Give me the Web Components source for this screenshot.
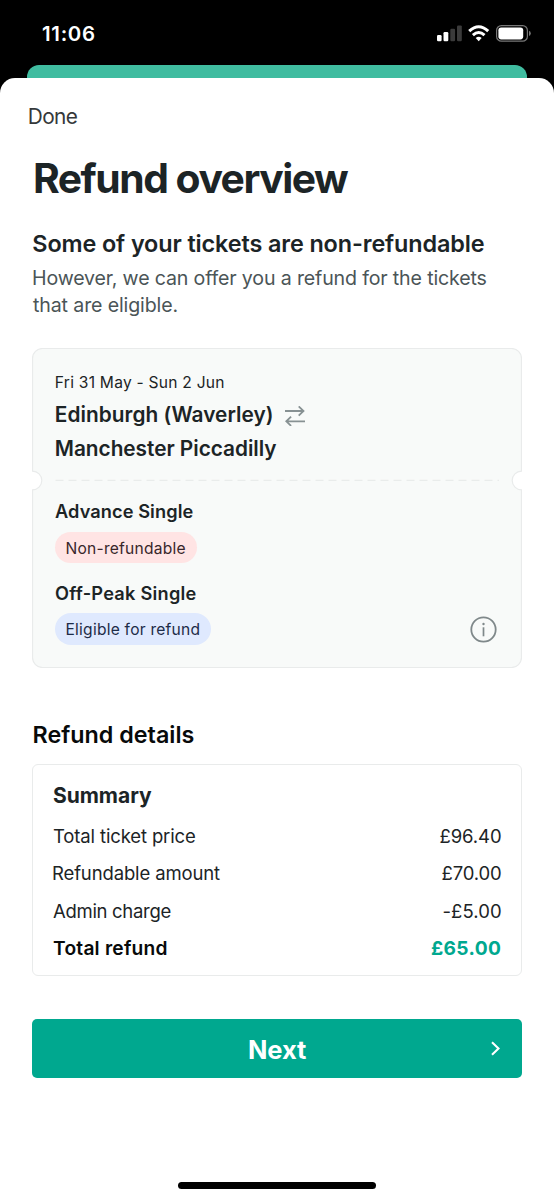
<!DOCTYPE html>
<html lang="en">
<head>
<meta charset="utf-8">
<title>Refund overview</title>
<style>
html,body{margin:0;padding:0;background:#000}
body{width:554px;height:1200px;overflow:hidden;font-family:Inter,"Noto Sans",sans-serif}
</style>
</head>
<body>
<refund-screen></refund-screen>
<script>
const define = (name, html, setup) => {
  const t = document.createElement('template');
  t.innerHTML = html;
  customElements.define(name, class extends HTMLElement {
    constructor() {
      super();
      this.attachShadow({mode: 'open'}).append(t.content.cloneNode(true));
    }
    connectedCallback() { if (setup) setup.call(this, this.shadowRoot); }
  });
};

/* Single line of text; tracking and side margins are set so its ink spans `ink` pixels. */
const ctx = document.createElement('canvas').getContext('2d');
define('ui-text', `<style>:host{display:block;white-space:nowrap;width:max-content;font-kerning:normal}</style><slot></slot>`,
function () {
  const a = n => this.getAttribute(n);
  const size = +a('size'), weight = a('weight') || 400, text = this.textContent;
  ctx.font = `${weight} ${size}px Inter`;
  const m = ctx.measureText(text);
  const ls = (+a('ink') - (m.actualBoundingBoxRight + m.actualBoundingBoxLeft)) / (text.length - 1);
  Object.assign(this.style, {
    fontSize: size + 'px', fontWeight: weight, lineHeight: a('line') + 'px',
    letterSpacing: ls.toFixed(3) + 'px', color: a('color') || '#1c2426',
    marginLeft: m.actualBoundingBoxLeft.toFixed(2) + 'px',
    marginRight: (m.actualBoundingBoxRight - m.width - ls).toFixed(2) + 'px'
  });
});

define('status-bar', `<style>
:host{display:flex;justify-content:space-between;height:65px;box-sizing:border-box;padding:21px 23px 0 42px}
svg{display:block}
</style>
<ui-text size="20.4" weight="600" line="25" ink="53" color="#fff">11:06</ui-text>
<svg width="96" height="24" viewBox="435 21 96 24">
<g fill="#fff"><rect x="437" y="35" width="4.6" height="6.2" rx="1.2"/><rect x="443.5" y="32" width="4.8" height="9.2" rx="1.2"/></g>
<g fill="#3b3b3b"><rect x="450.3" y="28.8" width="4.8" height="12.4" rx="1.2"/><rect x="457" y="25.4" width="4.8" height="15.8" rx="1.2"/></g>
<g fill="none" stroke="#fff" stroke-width="3"><path d="M469.2 31.2Q478.7 22.3 488.2 31.2"/><path d="M472.9 35.1Q478.7 29.8 484.5 35.1"/></g>
<path d="M475.7 38.1Q478.7 35.4 481.7 38.1L478.7 41.3Z" fill="#fff"/>
<rect x="496.6" y="25.6" width="30.8" height="15.6" rx="4.8" fill="none" stroke="#777" stroke-width="1.2"/>
<rect x="498.4" y="27.4" width="24.8" height="12" rx="2.8" fill="#fff"/>
<path d="M529 30.7Q530.8 31.5 530.8 33.4T529 36.1Z" fill="#777"/>
</svg>`);

define('back-sheet', `<style>:host{display:block;height:27px;margin:0 27px -14px;background:#40bca0;border-radius:12px 12px 0 0}</style>`);

define('modal-sheet', `<style>
:host{display:block;position:relative;height:1122px;box-sizing:border-box;padding:27px 32px 0;background:#fff;border-radius:15px 15px 0 0}
</style><slot></slot>`);

define('status-pill', `<style>
:host{display:flex;align-items:center;width:max-content;height:31.5px;box-sizing:border-box;padding:1.6px 11.5px 0 11.5px;border-radius:16px;background:var(--pill)}
</style><slot></slot>`);

define('ticket-card', `<style>
:host{display:grid;position:relative;grid-template-rows:132px 1fr;height:320px;margin-top:28.8px}
.bg{position:absolute;inset:0}
.head{padding:25px 23.8px 0;position:relative}
.row{display:flex;align-items:center;height:34.5px}
.row svg{margin:2px 0 0 13px}
.body{position:relative;display:flex;justify-content:space-between;align-items:flex-end;padding:0 25.500px 23px 23px}
.body svg{display:block;margin-bottom:2px}
</style>
<svg class="bg" width="490" height="320" viewBox="0 0 490 320">
<path d="M10.5.5H479.500A10 10 0 0 1 489.500 10.500V123.200A9.300 9.300 0 0 0 489.500 141.800V309.500A10 10 0 0 1 479.500 319.500H10.500A10 10 0 0 1 .5 309.500V141.800A9.300 9.300 0 0 0 .5 123.200V10.500A10 10 0 0 1 10.500.5Z" fill="#f8faf9" stroke="#e9ebeb" stroke-width="1.2"/>
<path d="M23.500 132.300H467" stroke="#e9eceb" stroke-width="1.3" stroke-dasharray="8 5"/>
</svg>
<div class="head">
<ui-text size="15.6" line="20" ink="167.5" style="margin-bottom:4.8px">Fri 31 May - Sun 2 Jun</ui-text>
<div class="row"><ui-text size="20.8" weight="600" line="34.500" ink="216">Edinburgh (Waverley)</ui-text>
<svg width="20" height="20" viewBox="0 0 20 20" fill="none" stroke="#879193" stroke-width="1.8"><path d="M0 5H18.500M13.700 .4L18.500 5L13.700 9.600M20 15.300H1.300M6.100 10.700L1.300 15.300L6.100 19.900"/></svg></div>
<ui-text size="20.8" weight="600" line="34.500" ink="220.500">Manchester Piccadilly</ui-text>
</div>
<div class="body">
<div>
<ui-text size="18.2" weight="600" line="24" ink="137.500" style="margin-top:-.6px">Advance Single</ui-text>
<status-pill style="--pill:#ffe4e4;margin:8.800px 0 17.600px"><ui-text size="15.6" line="20" ink="119" color="#38272b">Non-refundable</ui-text></status-pill>
<ui-text size="18.2" weight="600" line="24" ink="140.500">Off-Peak Single</ui-text>
<status-pill style="--pill:#dfe9fe;margin-top:8.400px;padding-top:2.400px"><ui-text size="15.6" line="20" ink="133" color="#1d2c48">Eligible for refund</ui-text></status-pill>
</div>
<svg width="27" height="27" viewBox="0 0 27 27"><circle cx="13.500" cy="13.500" r="12.200" fill="none" stroke="#7f888a" stroke-width="1.800"/><path d="M13.500 11.300V20.300" stroke="#7f888a" stroke-width="1.700"/><circle cx="13.500" cy="8" r="1.200" fill="#7f888a"/></svg>
</div>`);

define('price-row', `<style>:host{display:flex;justify-content:space-between;height:37.5px}</style>
<slot></slot><slot name="price"></slot>`);

define('summary-card', `<style>
:host{display:block;height:212px;box-sizing:border-box;margin-top:15.700px;padding:16.200px 20px 0;border:1.200px solid #e9ebeb;border-radius:6px}
ui-text{margin-bottom:8px}
</style>
<ui-text size="21" weight="700" line="28" ink="99">Summary</ui-text><slot></slot>`);

define('next-button', `<style>
:host{display:block;margin-top:43px}
button{display:grid;grid-template-columns:1fr auto 1fr;align-items:center;width:490px;height:59px;padding:0 22px;border:0;border-radius:5px;background:#00a88f;font-family:inherit}
svg{justify-self:end}
.label{display:flex;grid-column:2;padding:2px 0 0 1px}
</style><button><span class="label"><slot></slot></span><svg width="9" height="15" viewBox="0 0 9 15" fill="none" stroke="#fff" stroke-width="2.1"><path d="M1 1.200L7.500 7.500L1 13.800"/></svg></button>`);

define('home-indicator', `<style>
:host{position:absolute;left:178px;bottom:11px;width:198px;height:7px;border-radius:4px;background:#000}
</style>`);

define('refund-screen', `<style>:host{display:block;width:554px;height:1200px;background:#000}
.done{display:flex;margin-left:-3.200px}
.h1{padding:23.900px 0 27.100px 3px}
.copy{padding-left:1.300px}
.copy2{padding:7.200px 0 0 1px}
.h2{padding:52.700px 0 0 1.500px}
</style>
<status-bar></status-bar><back-sheet></back-sheet>
<modal-sheet>
<div class="done"><ui-text size="20.8" line="24" ink="49" color="#35383a">Done</ui-text></div>
<div class="h1"><ui-text size="40.8" weight="650" line="50" ink="314">Refund overview</ui-text></div>
<div class="copy"><ui-text size="23.4" weight="600" line="28" ink="450.500">Some of your tickets are non-refundable</ui-text></div>
<div class="copy2"><ui-text size="19.6" line="27" ink="453.500" color="#4b5557">However, we can offer you a refund for the tickets</ui-text><ui-text size="19.6" line="27" ink="144.500" color="#4b5557">that are eligible.</ui-text></div>
<ticket-card></ticket-card>
<div class="h2"><ui-text size="23.3" weight="600" line="28" ink="160" color="#080a0a">Refund details</ui-text></div>
<summary-card>
<price-row><ui-text size="18.5" line="37.500" ink="142">Total ticket price</ui-text><ui-text slot="price" size="18.5" line="37.500" ink="61.500">£96.40</ui-text></price-row>
<price-row><ui-text size="18.5" line="37.500" ink="167">Refundable amount</ui-text><ui-text slot="price" size="18.5" line="37.500" ink="59.500">£70.00</ui-text></price-row>
<price-row><ui-text size="18.5" line="37.500" ink="117.500">Admin charge</ui-text><ui-text slot="price" size="18.5" line="37.500" ink="57.500">-£5.00</ui-text></price-row>
<price-row><ui-text size="19.2" weight="600" line="37.500" ink="113.500" color="#080a0a">Total refund</ui-text><ui-text slot="price" size="19.2" weight="700" line="37.500" ink="70" color="#00a88f">£65.00</ui-text></price-row>
</summary-card>
<next-button><ui-text size="25.5" weight="700" line="32" ink="57" color="#fff">Next</ui-text></next-button>
<home-indicator></home-indicator>
</modal-sheet>`);
</script>
</body>
</html>
